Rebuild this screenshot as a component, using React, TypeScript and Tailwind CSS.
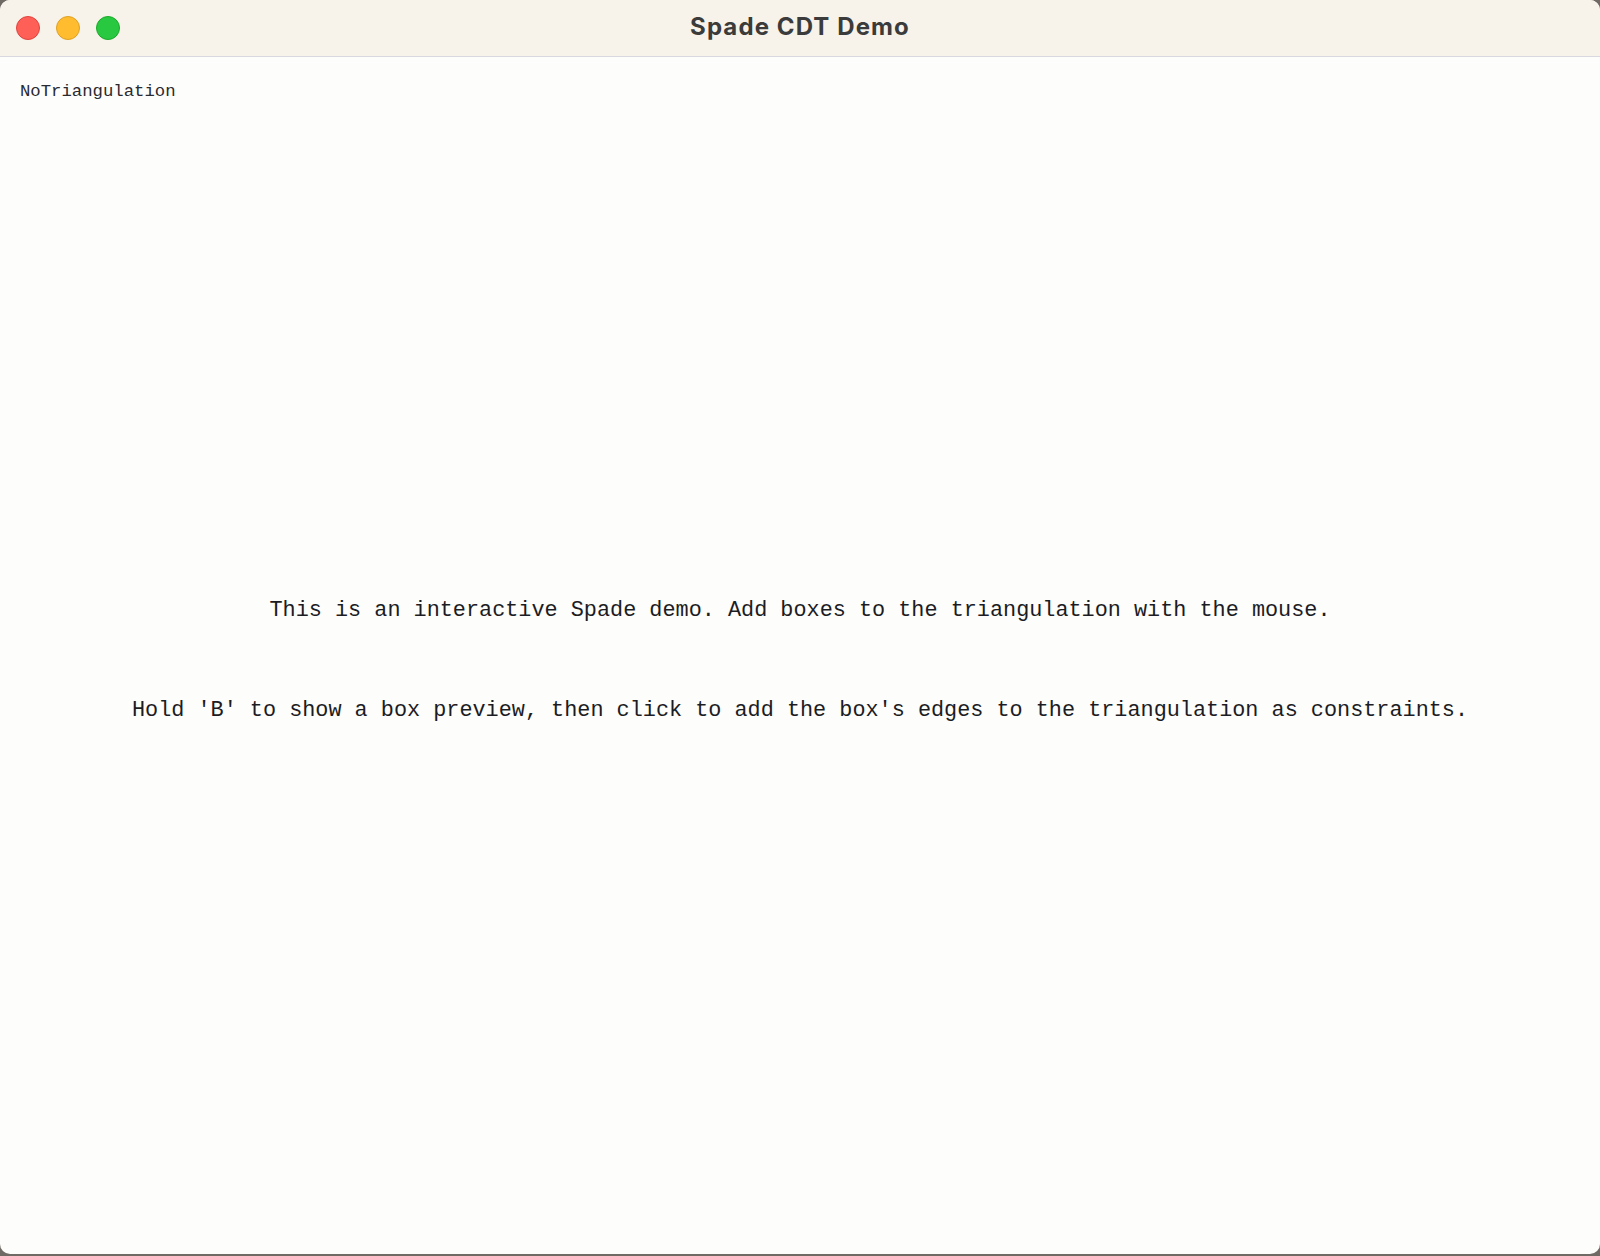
export default function App() {
  return (
    <div className="h-[1256px] w-[1600px] bg-[#6f6a64]">
      <div className="flex h-[1254px] w-[1600px] flex-col overflow-hidden rounded-[10px] bg-[#fdfdfb]">
        <header className="relative flex h-[57px] shrink-0 items-center border-b border-[#d9d7e0] bg-[#f7f2ea]">
          <div className="flex gap-4 pl-4">
            <span className="h-6 w-6 rounded-full border border-[#e0443e] bg-[#fe5f57]" />
            <span className="h-6 w-6 rounded-full border border-[#dea123] bg-[#febc2e]" />
            <span className="h-6 w-6 rounded-full border border-[#1aab29] bg-[#28c840]" />
          </div>
          <h1 className="absolute inset-x-0 top-[12px] text-center font-['Inter',sans-serif] text-[24px] font-bold leading-[30px] tracking-[1.1px] text-[#3b3b3b]">
            Spade CDT Demo
          </h1>
        </header>

        <main className="flex flex-1 flex-col font-['Liberation_Mono',monospace] text-[#1c1c24]">
          <div className="mt-[25px] pl-5 text-[17.3px] leading-[20px] text-[#2a2a30]">
            NoTriangulation
          </div>
          <p className="mt-[496px] text-center text-[21.83px] leading-[25px]">
            This is an interactive Spade demo. Add boxes to the triangulation with the mouse.
          </p>
          <p className="mt-[75px] text-center text-[21.83px] leading-[25px]">
            Hold 'B' to show a box preview, then click to add the box's edges to the triangulation as constraints.
          </p>
        </main>
      </div>
    </div>
  );
}
